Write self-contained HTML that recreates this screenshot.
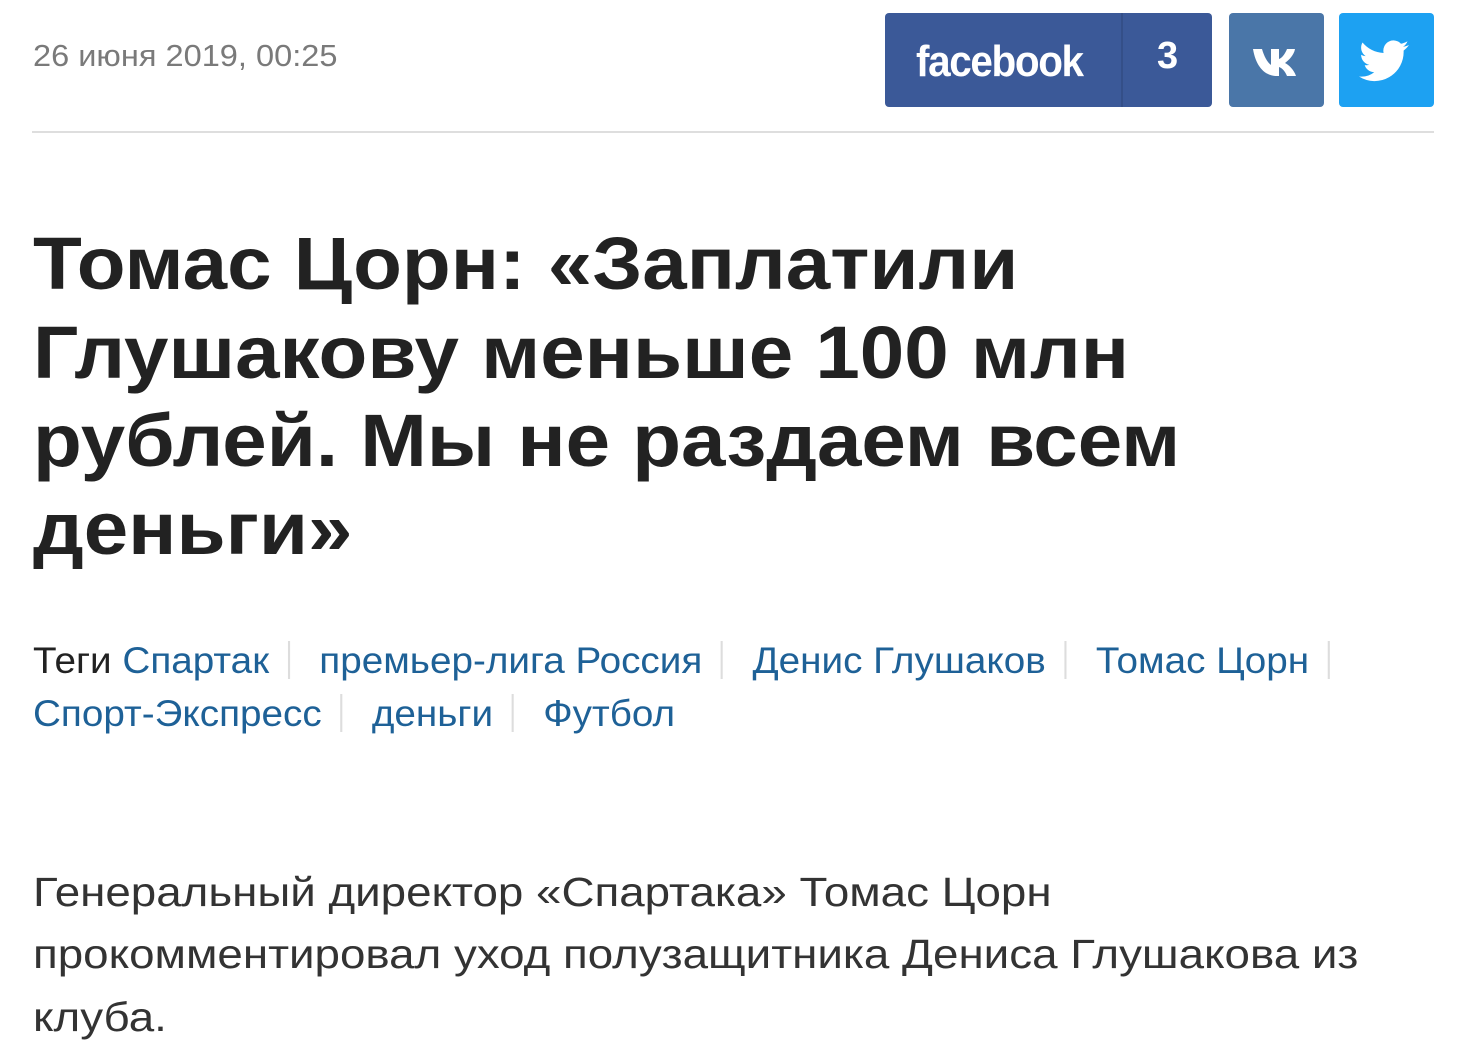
<!DOCTYPE html>
<html><head><meta charset="utf-8">
<style>
html,body{margin:0;padding:0;background:#fff;width:1460px;height:1059px;overflow:hidden}
body{font-family:"Liberation Sans","Noto Sans CJK SC",sans-serif;position:relative}
.abs{position:absolute;white-space:nowrap;transform-origin:0 0}
.date{left:33px;top:38px;font-size:31px;color:#7a7a7a;transform:scaleX(1.05)}
.hr{position:absolute;left:32px;top:131px;width:1402px;height:2px;background:#dedede}
.btn{position:absolute;top:13px;height:94px;border-radius:4px;color:#fff}
.fb{left:885px;width:327px;background:#3b5998}
.fb .t{position:absolute;left:31px;top:24px;font-size:44px;font-weight:bold;letter-spacing:-1.5px;transform:scaleX(.92);transform-origin:0 0}
.fb .sep{position:absolute;left:236px;top:0;width:2px;height:94px;background:#344f88}
.fb .n{position:absolute;left:272px;top:22px;font-size:38px;font-weight:bold}
.vk{left:1229px;width:95px;background:#4a76a8}
.tw{left:1339px;width:95px;background:#1da1f2}
.title{left:33px;font-size:74px;font-weight:bold;color:#222;transform:scaleX(1.08)}
.tags{font-size:37px;color:#1e6197;transform:scaleX(1.045)}
.tags .g{color:#222}
.tags .s{display:inline-block;width:2px;height:38px;background:#ddd;vertical-align:-6px;margin:0 28px 0 18px}
.body{left:33px;font-size:41px;color:#333;transform:scaleX(1.115)}
</style></head><body>
<div class="abs date">26 июня 2019, 00:25</div>
<div class="btn fb"><span class="t">facebook</span><div class="sep"></div><span class="n">3</span></div>
<div class="btn vk"><svg width="95" height="94" viewBox="0 0 95 94"><path d="M24 36h9c2 7 5 13 9 16V36h8v10c3-1 6-5 8-10h8c-1 6-6 11-10 14 4 2 9 7 11 13h-9c-2-5-5-8-8-9v9h-2c-12 0-21-9-24-27z" fill="#fff"/></svg></div>
<div class="btn tw"><svg width="95" height="94" viewBox="0 0 95 94"><path d="M70 32c-2 1-4 1.5-6 1.8 2-1.3 3.7-3.300 4.500-5.600-2 1.200-4.200 2-6.500 2.500a10.200 10.200 0 0 0-17.400 9.300C36 39.600 28.500 35.600 23.500 29.500c-2.700 4.700-1.300 10.600 3.200 13.600-1.600 0-3.200-.5-4.600-1.300 0 4.900 3.500 9.100 8.200 10.100-1.500.4-3.100.5-4.600.2 1.300 4.100 5.100 7 9.500 7.100A20.500 20.500 0 0 1 20 63.500 29 29 0 0 0 64.600 37.600c2-1.500 3.700-3.300 5.400-5.600z" fill="#fff"/></svg></div>
<div class="hr"></div>
<div class="abs title" style="top:221px">Томас Цорн: «Заплатили</div>
<div class="abs title" style="top:310px">Глушакову меньше 100 млн</div>
<div class="abs title" style="top:398px">рублей. Мы не раздаем всем</div>
<div class="abs title" style="top:486px">деньги»</div>
<div class="abs tags" style="left:33px;top:640px"><span class="g">Теги</span> Спартак<span class="s"></span>премьер-лига Россия<span class="s"></span>Денис Глушаков<span class="s"></span>Томас Цорн<span class="s"></span></div>
<div class="abs tags" style="left:33px;top:693px">Спорт-Экспресс<span class="s"></span>деньги<span class="s"></span>Футбол</div>
<div class="abs body" style="top:869px">Генеральный директор «Спартака» Томас Цорн</div>
<div class="abs body" style="top:931px">прокомментировал уход полузащитника Дениса Глушакова из</div>
<div class="abs body" style="top:994px">клуба.</div>
</body></html>
